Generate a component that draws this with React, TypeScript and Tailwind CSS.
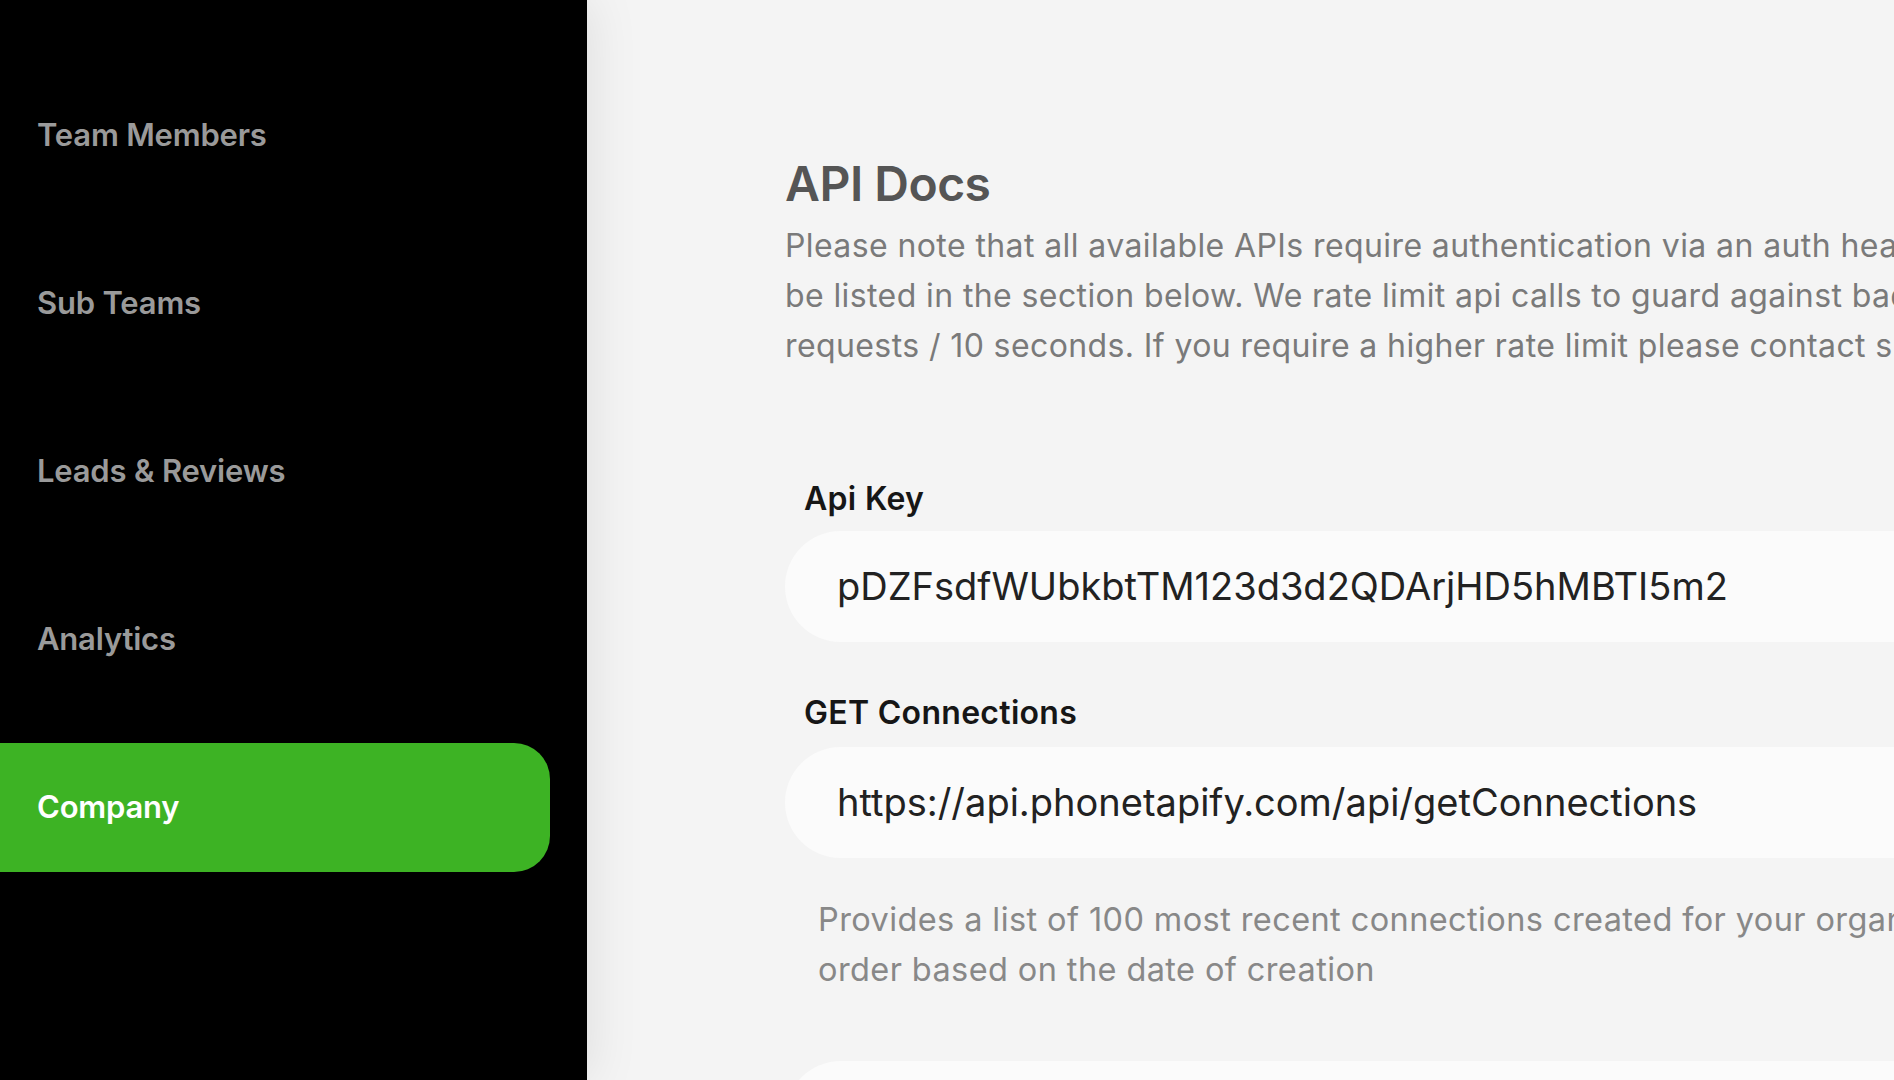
import React from 'react';

const navItems = [
  { key: 'team', label: 'Team Members' },
  { key: 'sub', label: 'Sub Teams' },
  { key: 'leads', label: 'Leads & Reviews' },
  { key: 'analytics', label: 'Analytics' },
  { key: 'company', label: 'Company' },
];

const activeKey = 'company';

const introLines = [
  'Please note that all available APIs require authentication via an auth header. Your API key will',
  'be listed in the section below. We rate limit api calls to guard against bad actors at 100',
  'requests / 10 seconds. If you require a higher rate limit please contact support.',
];

function Sidebar() {
  return (
    <aside className="relative z-10 w-[587px] shrink-0 h-full bg-black shadow-[0_0_50px_rgba(0,0,0,0.10)]">
      <nav className="flex flex-col gap-[39px] pt-[71px]">
        {navItems.map((item) => {
          const isActive = item.key === activeKey;
          return (
            <div
              key={item.key}
              className={`flex items-center h-[129px] w-[550px] pl-[37px] rounded-r-[36px] text-[31px] font-semibold tracking-[-0.2px] ${
                isActive ? 'bg-[#3db324] text-white' : 'text-[#9a9a9a]'
              }`}
            >
              {item.label}
            </div>
          );
        })}
      </nav>
    </aside>
  );
}

function FieldLabel({ children }: { children: React.ReactNode }) {
  return (
    <div className="pl-[19px] h-[36px] leading-[36px] text-[32px] font-semibold text-[#161616] tracking-[0.3px]">
      {children}
    </div>
  );
}

function ValueBox({ value }: { value: string }) {
  return (
    <div className="h-[111px] w-[1400px] rounded-full bg-[#fbfbfb] flex items-center pl-[52px] text-[38px] text-[#222222] whitespace-nowrap">
      {value}
    </div>
  );
}

export default function App() {
  return (
    <div
      className="flex w-[1894px] h-[1080px] overflow-hidden bg-[#f4f4f4]"
      style={{ fontFamily: 'Inter, "Noto Sans", sans-serif' }}
    >
      <Sidebar />

      <main className="flex-1 min-w-0 pl-[198px] pt-[156px]">
        {/* heading + intro */}
        <h1 className="h-[56px] leading-[56px] text-[48px] font-semibold text-[#555555] tracking-[-0.5px]">API Docs</h1>
        <div className="mt-[9px] text-[32px] leading-[50px] tracking-[0.4px] text-[#7a7a7a] whitespace-nowrap">
          {introLines.map((line) => (
            <div key={line}>{line}</div>
          ))}
        </div>

        {/* api key */}
        <div className="mt-[110px]">
          <FieldLabel>Api Key</FieldLabel>
          <div className="mt-[14px]">
            <ValueBox value="pDZFsdfWUbkbtTM123d3d2QDArjHD5hMBTI5m2" />
          </div>
        </div>

        {/* connections endpoint */}
        <div className="mt-[53px]">
          <FieldLabel>GET Connections</FieldLabel>
          <div className="mt-[16px]">
            <ValueBox value="https://api.phonetapify.com/api/getConnections" />
          </div>
          <div className="mt-[37px] pl-[33px] text-[32.5px] leading-[50px] tracking-[0.4px] text-[#888888] whitespace-nowrap">
            <div>Provides a list of 100 most recent connections created for your organization in descending</div>
            <div>order based on the date of creation</div>
          </div>
        </div>

        <div className="mt-[66px] h-[112px] w-[1400px] rounded-[56px] bg-[#fbfbfb]" />
      </main>
    </div>
  );
}
